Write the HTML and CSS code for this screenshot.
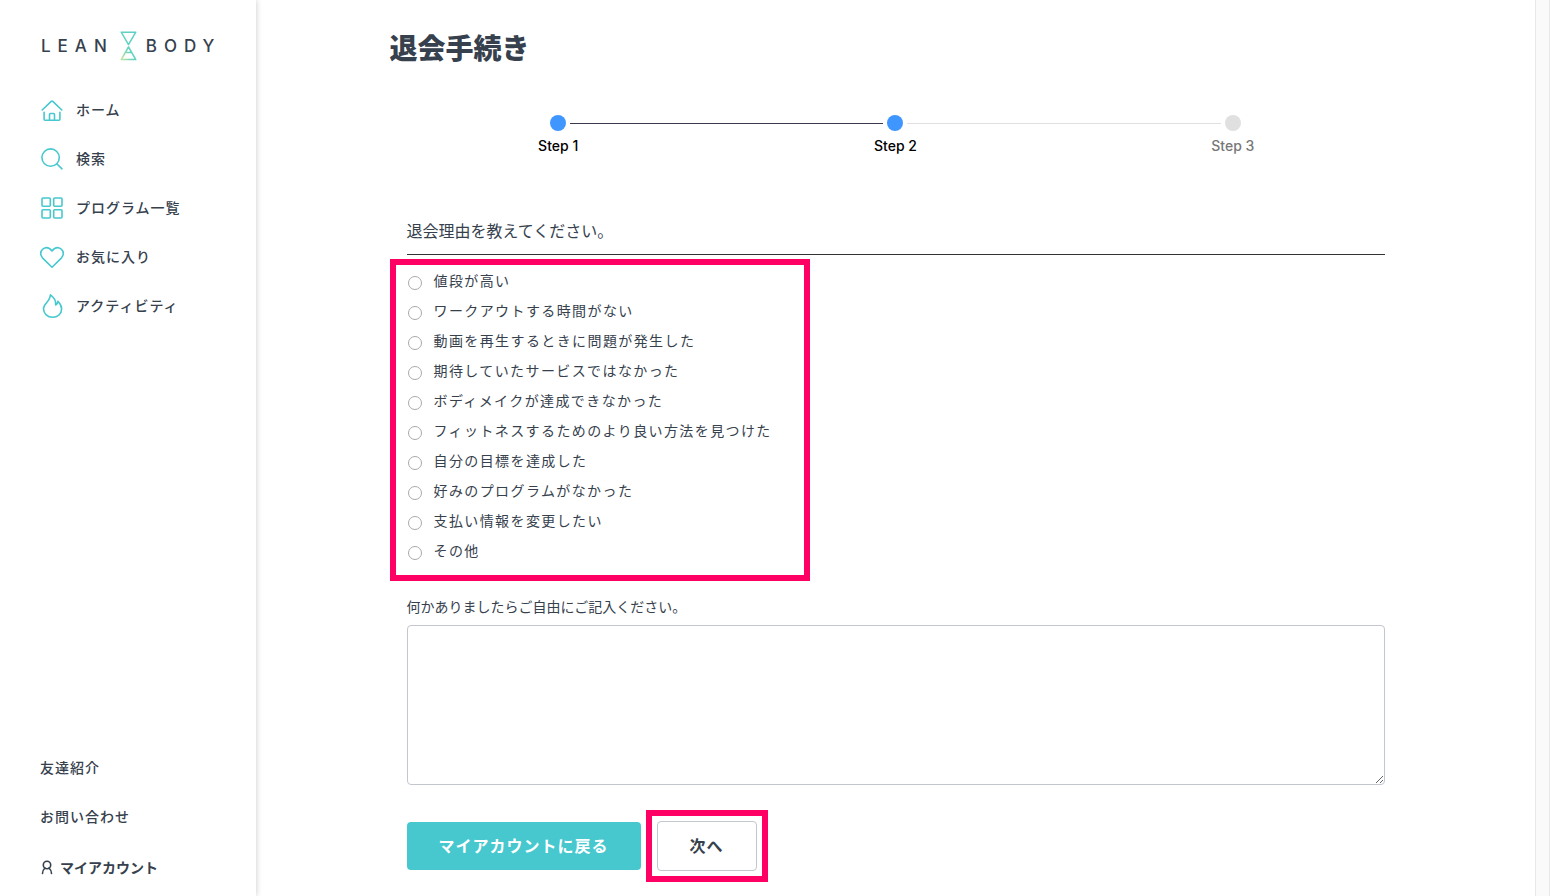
FILE: index.html
```html
<!DOCTYPE html>
<html lang="ja">
<head>
<meta charset="utf-8">
<meta name="viewport" content="width=device-width, initial-scale=1">
<title>退会手続き | LEAN BODY</title>
<link rel="stylesheet" href="styles.css">
</head>
<body>
<div class="app">
  <aside class="sidebar">
    <a class="logo" href="#" aria-label="LEAN BODY">
      <span class="logo-word">LEAN</span>
      <svg class="logo-mark" width="18" height="30" viewBox="0 0 18 30" fill="none" stroke="url(#mark)" stroke-width="1.5" stroke-linejoin="round">
        <defs><linearGradient id="mark" gradientUnits="userSpaceOnUse" x1="2" y1="28" x2="17" y2="22"><stop offset="0" stop-color="#bde3a0"/><stop offset=".6" stop-color="#62d3bd"/><stop offset="1" stop-color="#5ed0c6"/></linearGradient></defs>
        <path d="M1.2 1.2h14.6L8.5 13.6zM8.5 16l7.3 12.6H1.2zM5.2 21.6h6.6"/>
      </svg>
      <span class="logo-word">BODY</span>
    </a>
    <nav class="nav" aria-label="メイン">
      <a class="nav-link" href="#">
        <svg class="icon" viewBox="0 0 24 24"><path d="M2.2 12 11.2 3.4q.8-.7 1.6 0L21.8 12M4.1 14.3v7q0 1 1 1h13.8q1 0 1-1v-7M9.5 22v-5.5q0-1 1-1h3q1 0 1 1V22"/></svg>
        ホーム</a>
      <a class="nav-link" href="#">
        <svg class="icon" viewBox="0 0 24 24"><circle cx="10.6" cy="10.6" r="8.7"/><path d="m17 17 5 4.8"/></svg>
        検索</a>
      <a class="nav-link" href="#">
        <svg class="icon" viewBox="0 0 24 24"><rect x="2" y="2" width="8.3" height="8.3" rx="1"/><rect x="13.7" y="2" width="8.3" height="8.3" rx="1"/><rect x="2" y="13.7" width="8.3" height="8.3" rx="1"/><rect x="13.7" y="13.7" width="8.3" height="8.3" rx="1"/></svg>
        プログラム一覧</a>
      <a class="nav-link" href="#">
        <svg class="icon" viewBox="0 0 24 24"><path d="M12 22.2 2.7 13.1C-.1 10.2.3 6 2.8 4.1 6 1.8 9.4 2.7 12 6c2.6-3.3 6-4.2 9.2-1.9 2.5 1.9 2.9 6.1.1 9z"/></svg>
        お気に入り</a>
      <a class="nav-link" href="#">
        <svg class="icon" viewBox="0 0 24 24"><path d="M10.4.8c3.8 2.5 5.6 5.9 5.3 10.2 1.5-.8 2.1-2.1 2.2-3.7 2.4 2.5 3.7 5 3.7 7.6 0 5-4 8.4-9 8.4s-9.1-3.6-9.1-8.7c0-5.2 6.8-7 6.9-13.8z"/></svg>
        アクティビティ</a>
    </nav>
    <nav class="subnav" aria-label="サポート">
      <a class="sub-link" href="#">友達紹介</a>
      <a class="sub-link" href="#">お問い合わせ</a>
      <a class="sub-link account" href="#">
        <svg class="person" width="14" height="16" viewBox="0 0 14 16"><circle cx="7" cy="6" r="3.7"/><path d="M5 9C3.4 10.3 2.7 12 2.5 14.5M9 9c1.6 1.3 2.3 3 2.5 5.5"/></svg>
        マイアカウント</a>
    </nav>
  </aside>

  <main class="main">
    <div class="content">
      <h1 class="title">退会手続き</h1>
      <ol class="steps">
        <li class="step done"><span class="dot"></span><span class="step-name">Step 1</span></li>
        <li class="step current" aria-current="step"><span class="dot"></span><span class="step-name">Step 2</span></li>
        <li class="step"><span class="dot"></span><span class="step-name">Step 3</span></li>
      </ol>
      <form class="form">
        <h2 class="question" id="reason">退会理由を教えてください。</h2>
        <div class="options" role="radiogroup" aria-labelledby="reason">
          <label class="option"><input class="radio" type="radio" name="reason">値段が高い</label>
          <label class="option"><input class="radio" type="radio" name="reason">ワークアウトする時間がない</label>
          <label class="option"><input class="radio" type="radio" name="reason">動画を再生するときに問題が発生した</label>
          <label class="option"><input class="radio" type="radio" name="reason">期待していたサービスではなかった</label>
          <label class="option"><input class="radio" type="radio" name="reason">ボディメイクが達成できなかった</label>
          <label class="option"><input class="radio" type="radio" name="reason">フィットネスするためのより良い方法を見つけた</label>
          <label class="option"><input class="radio" type="radio" name="reason">自分の目標を達成した</label>
          <label class="option"><input class="radio" type="radio" name="reason">好みのプログラムがなかった</label>
          <label class="option"><input class="radio" type="radio" name="reason">支払い情報を変更したい</label>
          <label class="option"><input class="radio" type="radio" name="reason">その他</label>
        </div>
        <div class="comment">
          <label class="comment-label" for="comment">何かありましたらご自由にご記入ください。</label>
          <textarea class="comment-box" id="comment"></textarea>
        </div>
        <div class="actions">
          <button class="button primary" type="button">マイアカウントに戻る</button>
          <div class="marked"><button class="button secondary" type="submit">次へ</button></div>
        </div>
      </form>
    </div>
  </main>
  <div class="gutter"></div>
</div>
</body>
</html>
```
FILE: styles.css
```css
* { box-sizing: border-box; }

body {
  margin: 0;
  color: #36414d;
  background: #fff;
  font-family: "Noto Sans CJK JP", sans-serif;
  font-size: 14px;
  line-height: 24px;
}

a { color: inherit; text-decoration: none; }

.app { display: flex; min-height: 100vh; }

.sidebar {
  display: flex;
  flex-direction: column;
  flex: 0 0 256px;
  padding: 30px 0 17px 40px;
  box-shadow: 0 0 6px rgba(0, 0, 0, .22);
}

.logo {
  display: flex;
  align-items: center;
  height: 32px;
  gap: 6px;
}
.logo-word {
  font-family: Inter, sans-serif;
  font-size: 17px;
  font-weight: 500;
  letter-spacing: 7px;
}
.logo-word:first-child { padding-left: 1px; }
.logo-mark { margin-right: 2px; }

.nav {
  display: flex;
  flex-direction: column;
  gap: 25px;
  margin-top: 36px;
  font-weight: 500;
  line-height: 22px;
  letter-spacing: 1px;
}
.nav-link { display: flex; gap: 12px; }

.icon {
  width: 24px;
  height: 24px;
  overflow: visible;
  fill: none;
  stroke: #46c8ce;
  stroke-width: 1.6;
  stroke-linecap: round;
  stroke-linejoin: round;
}

.subnav {
  display: flex;
  flex-direction: column;
  gap: 25px;
  margin-top: auto;
  font-weight: 500;
  letter-spacing: 1px;
}
.account {
  display: flex;
  align-items: center;
  gap: 6px;
  margin-top: 2px;
  font-weight: 700;
  letter-spacing: 0;
}
.person { fill: none; stroke: #36414d; stroke-width: 1.6; stroke-linecap: round; }

.main { flex: 1; min-width: 0; }

.content { max-width: 1012px; margin: 0 auto; padding-top: 27px; }

.title { margin: 0; font-size: 28px; line-height: 40px; font-weight: 900; }

.steps {
  display: grid;
  grid-template-columns: repeat(3, 1fr);
  margin: 48px 0 0;
  padding: 0;
  list-style: none;
}
.step {
  display: grid;
  grid-template-columns: 1fr 16px 1fr;
  column-gap: 4px;
  align-items: center;
  color: #777;
  font-family: Inter, sans-serif;
  font-size: 14px;
  font-weight: 500;
}
.step::before, .step::after {
  content: "";
  grid-row: 1;
  height: 1px;
  background: #e0e0e0;
}
.step::before { grid-column: 1; }
.step::after { grid-column: 3; }
.step:first-child::before, .step:last-child::after { background: none; }
.step.done::after, .step.current::before { background: #3a3a4c; }
.dot {
  grid-column: 2;
  grid-row: 1;
  height: 16px;
  border-radius: 50%;
  background: #e0e0e0;
}
.step.done, .step.current { color: #000; }
.done .dot, .current .dot { background: #4096ff; }
.step-name { grid-column: 1 / -1; margin-top: 3px; text-align: center; }

.question {
  margin: 60px 17px 0;
  padding-bottom: 12px;
  border-bottom: 1px solid #333;
  font-size: 16px;
  font-weight: 400;
}

.options {
  display: flex;
  flex-direction: column;
  width: 420px;
  max-width: 100%;
  margin-top: 4px;
  padding: 0 12px 10px;
  border: 6px solid #ff0064;
}
.option {
  display: flex;
  align-items: center;
  gap: 12px;
  min-height: 30px;
  letter-spacing: .1em;
}
.radio {
  appearance: none;
  width: 14px;
  height: 14px;
  margin: 6px 0 0;
  border: 1px solid #aaa;
  border-radius: 50%;
  background: #fff;
}
.radio:checked { border: 4px solid #4096ff; }

.comment { display: flex; flex-direction: column; gap: 7px; margin: 13px 17px 0; }
.comment-box {
  width: 100%;
  height: 160px;
  padding: 8px 12px;
  border: 1px solid #c2c7cd;
  border-radius: 4px;
  background: #fff;
  color: inherit;
  font: inherit;
  resize: vertical;
}

.actions { display: flex; align-items: center; gap: 5px; margin: 25px 17px 14px; }
.button {
  height: 48px;
  padding: 0 32px 2px;
  border: 0;
  border-radius: 4px;
  font-family: inherit;
  font-size: 16px;
  font-weight: 700;
  letter-spacing: 1px;
}
.primary { background: #46c8ce; color: #fff; }
.secondary { display: block; height: 50px; border: 1px solid #c2c7cd; background: #fff; color: #36414d; }
.marked { padding: 5px; border: 6px solid #ff0064; }

.gutter {
  flex: 0 0 15px;
  border: solid #e8e8e8;
  border-width: 0 1px;
  background: #fafafa;
}
```
